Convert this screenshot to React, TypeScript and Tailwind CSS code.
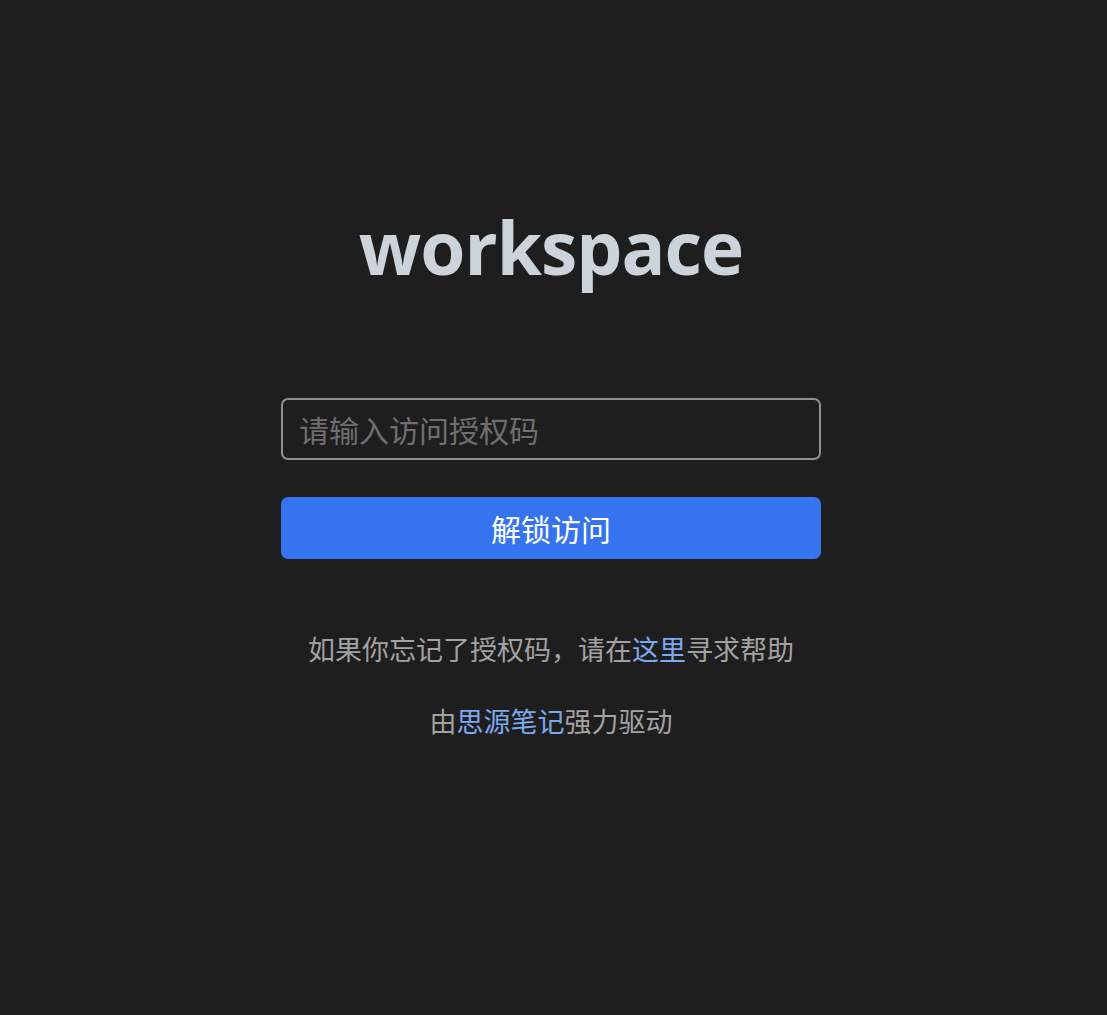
import React from "react";

export default function App() {
  return (
    <div
      className="min-h-[1015px] w-full bg-[#1e1e1e] flex flex-col items-center pr-[5px]"
      style={{ fontFamily: '"Open Sans", "Noto Sans CJK SC", sans-serif' }}
    >
      <h1 className="mt-[196px] h-[100px] flex items-center text-[73px] font-bold text-[#ccd3da] leading-none tracking-[-1px]">
        workspace
      </h1>
      <div className="mt-[102px] w-[540px] flex flex-col">
        <input
          type="password"
          placeholder="请输入访问授权码"
          className="h-[62px] w-full rounded-[7px] border-2 border-[#8f9094] bg-[#1e1e1e] px-[16px] text-[30px] text-[#ccd3da] placeholder:text-[#6f6f6f] outline-none"
          style={{ fontFamily: '"Noto Sans CJK SC", sans-serif' }}
        />
        <button
          className="mt-[37px] h-[62px] w-full rounded-[7px] bg-[#3674ef] text-[30px] text-white"
          style={{ fontFamily: '"Noto Sans CJK SC", sans-serif' }}
        >
          解锁访问
        </button>
      </div>
      <div
        className="mt-[71px] flex flex-col items-center gap-[35px] text-[27px] text-[#a2a2a2] leading-[37px]"
        style={{ fontFamily: '"Noto Sans CJK SC", sans-serif' }}
      >
        <div>
          如果你忘记了授权码，请在<span className="text-[#7ea8ee]">这里</span>寻求帮助
        </div>
        <div>
          由<span className="text-[#7ea8ee]">思源笔记</span>强力驱动
        </div>
      </div>
    </div>
  );
}
